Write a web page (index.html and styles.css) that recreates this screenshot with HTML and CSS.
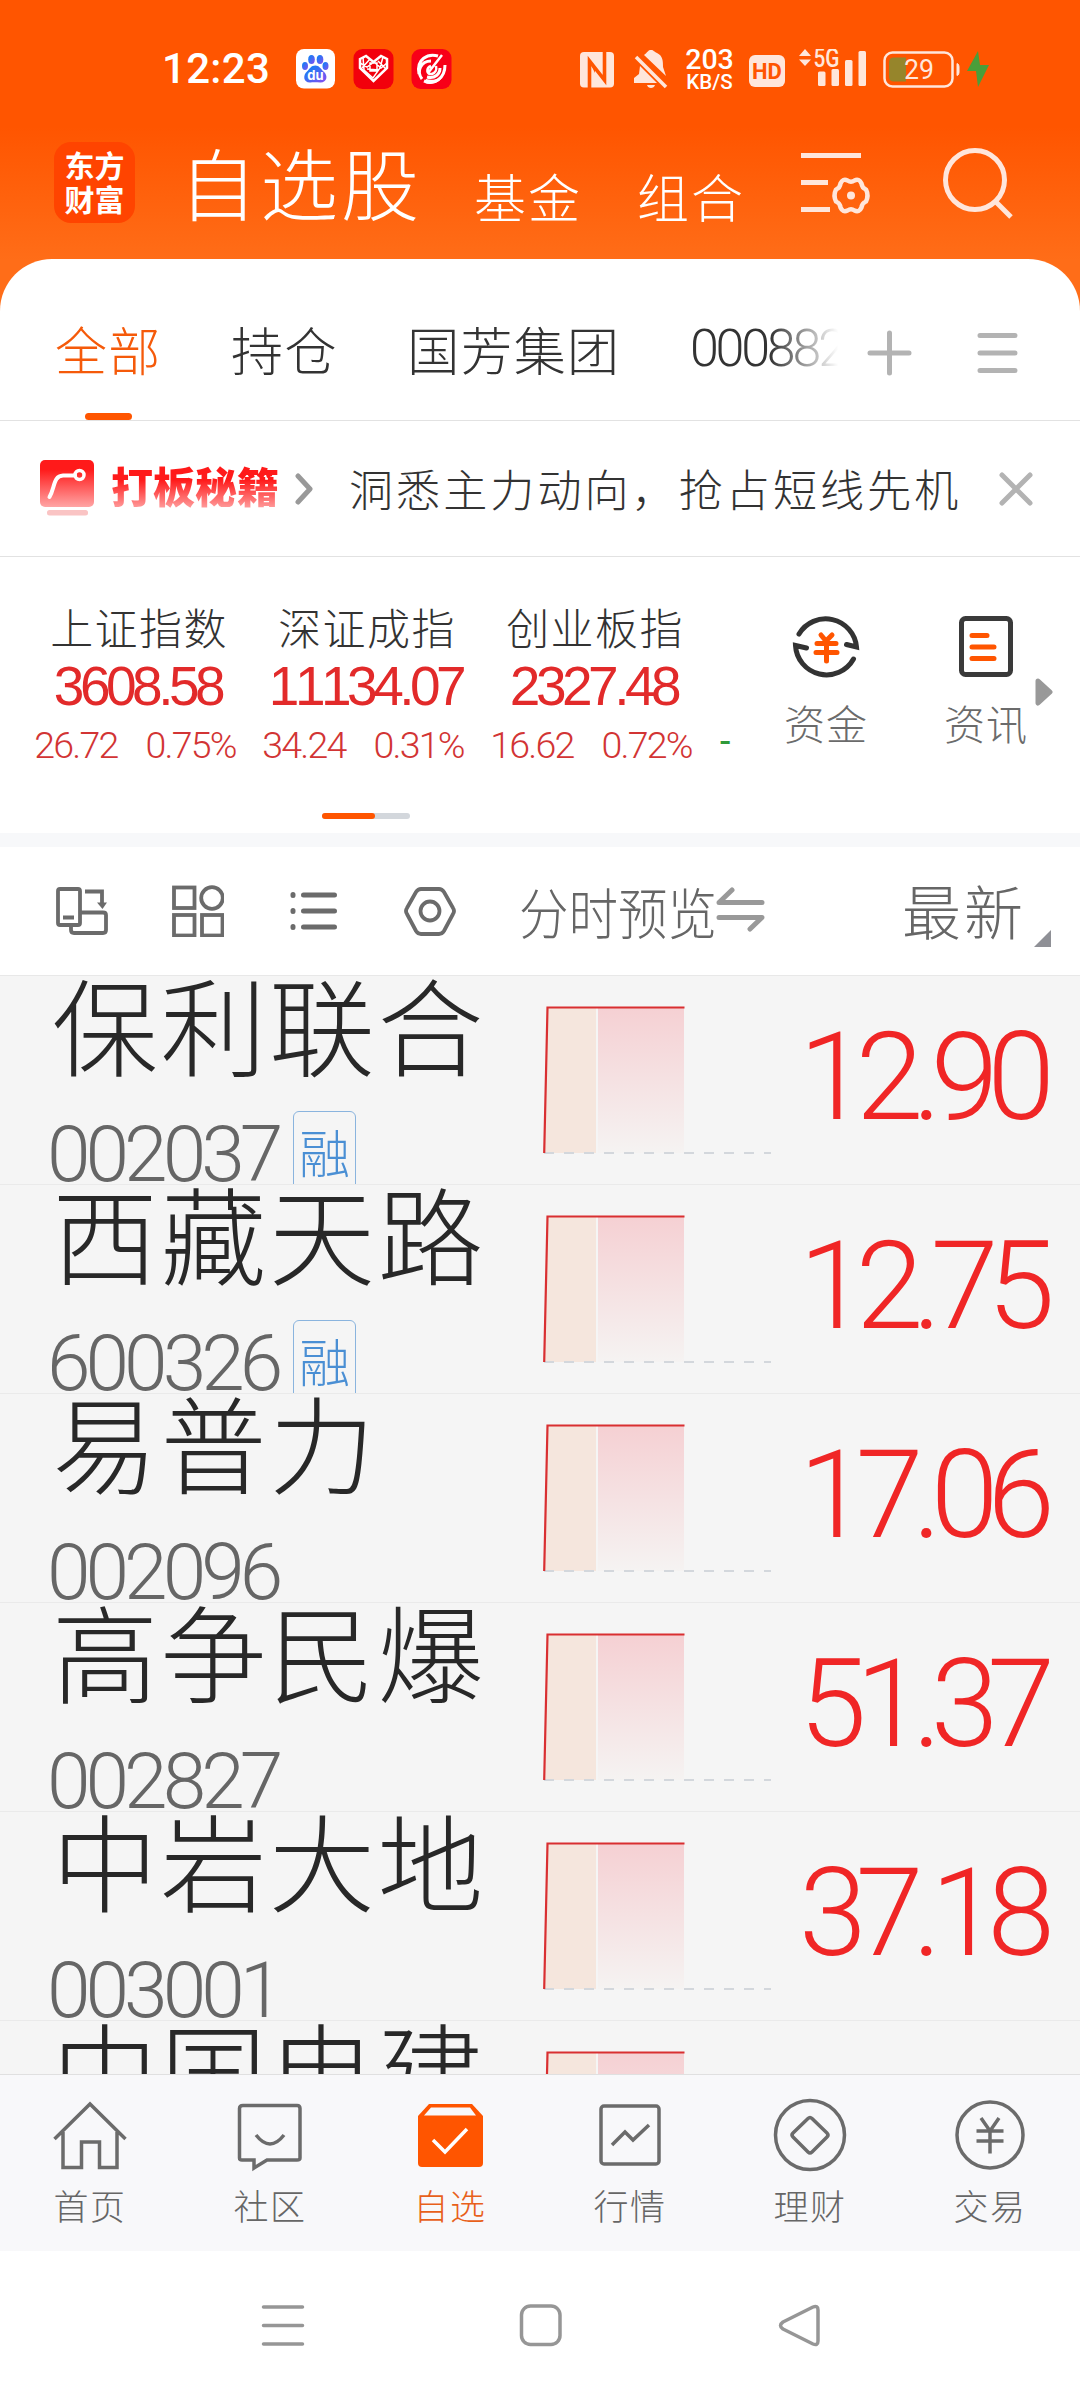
FILE: index.html
```html
<!DOCTYPE html>
<html lang="zh-CN">
<head>
<meta charset="utf-8">
<title>自选股</title>
<link rel="stylesheet" href="styles.css">
</head>
<body>
<svg class="defs" width="0" height="0">
  <defs>
    <linearGradient id="rise" x1="0" y1="0" x2="0" y2="1">
      <stop offset="0" stop-color="#f5d0d3"/><stop offset="1" stop-color="#f5f3f2"/>
    </linearGradient>
    <linearGradient id="promo" x1="0" y1="0" x2="0" y2="1">
      <stop offset="0.2" stop-color="#ff1a1a"/><stop offset="1" stop-color="#ffa5a5"/>
    </linearGradient>
    <linearGradient id="paw" x1="0" y1="0" x2="1" y2="1">
      <stop offset="0.2" stop-color="#1b7bf5"/><stop offset="1" stop-color="#8a4df0"/>
    </linearGradient>
    <symbol id="trend" viewBox="0 0 240 160">
      <path d="M4 153L7 8H56V153Z" fill="#f5e6dd"/>
      <rect x="58" y="8" width="86" height="145" fill="url(#rise)"/>
      <path d="M4 153H231" stroke="#d3d7dc" stroke-width="2" stroke-dasharray="10 10"/>
      <path d="M4.200 153L7.500 7.500H144.500" fill="none" stroke="#d92f31" stroke-width="2.200"/>
    </symbol>
  </defs>
</svg>
<div class="app">
  <div class="status">
    <span class="clock">12:23</span>
    <svg class="app-icons" width="156" height="40" viewBox="0 0 156 40">
      <rect width="39" height="39.500" rx="8" fill="#fff"/>
      <g fill="url(#paw)"><ellipse cx="15.500" cy="10.500" rx="3.300" ry="4.500"/><ellipse cx="24" cy="10.500" rx="3.300" ry="4.500"/><ellipse cx="9" cy="17" rx="3" ry="4"/><ellipse cx="29.500" cy="17" rx="3" ry="4"/><path d="M19.500 16.500c3.500 0 5 3 8 6c5 4 3.500 11-3 11c-3 0-7-.5-10 0c-7 .5-8-7-3.500-11c3-3 4-6 8.500-6z"/></g>
      <text x="19.500" y="31" text-anchor="middle" class="du">du</text>
      <rect x="57.500" width="40" height="40" rx="9" fill="#f2000c"/>
      <path d="M64 10l6-3l7.500 6l7.500-6l6 3v9L77.500 32L64 19z" fill="none" stroke="#fff" stroke-width="2.500"/>
      <path d="M64 14l7 4l7-5l7 6l6-5M67 8l1 13l9 8l7-10l3-11M71 20l12 1M66 19l8-9M82 12l8 8M74 14h7v8h-7z" fill="none" stroke="#fff" stroke-width="1.500"/>
      <rect x="115.500" width="40" height="40" rx="9" fill="#f80018"/>
      <path d="M142 7C132 4 120 10 123 25M128 32c10 4 21-2 21-16M126 30c-6-8-1-18 9-18M131 28c8 2 13-3 13-9" fill="none" stroke="#fff" stroke-width="3"/>
      <path d="M146 6L132 24M135 17c-5 2-5 9 1 8c3-1 5-4 4-8" fill="none" stroke="#fff" stroke-width="2.500"/>
      <path d="M130 30c7 2 14 0 17-5c-1 8-11 12-18 9z" fill="#fff"/>
    </svg>
    <svg class="nfc" width="35" height="36" viewBox="0 0 35 36"><rect width="34" height="35.500" rx="4" fill="#ffe6db"/><path d="M9.500 36V9L24.500 28V0" fill="none" stroke="#ff5500" stroke-width="3.600"/><path d="M9 9l6 5v7z" fill="#ff5500"/></svg>
    <svg class="bell" width="36" height="40" viewBox="0 0 36 40"><path d="M10 5C14 2 14 0 17 0s3 2 6 3c6 3 6 8 6 14l3 9zM6 16l17 17H0v-5l5-4zM13 35h8c-1 4-7 4-8 0z" fill="#ffe6db"/><path d="M2 7L32 37" stroke="#ffe6db" stroke-width="3.500"/></svg>
    <span class="rate"><b>203</b><i>KB/S</i></span>
    <span class="hd">HD</span>
    <svg class="signal" width="70" height="40" viewBox="0 0 70 40"><g fill="#ffe6db"><path d="M0 7l6-7l6 7zM0 10.500h12l-6 6.500z"/><rect x="19" y="22.500" width="7.500" height="14.500" rx="1.500"/><rect x="32.500" y="20" width="7.500" height="17" rx="1.500"/><rect x="46" y="11" width="7.500" height="26" rx="1.500"/><rect x="59.500" y="2" width="7.500" height="35" rx="1.500"/></g><text x="14.500" y="18" class="net" textLength="26" lengthAdjust="spacingAndGlyphs">5G</text></svg>
    <svg class="battery" width="106" height="40" viewBox="0 0 106 40"><rect x="1.500" y="3.500" width="68" height="34" rx="8" fill="none" stroke="#ffe6db" stroke-width="2.500"/><path d="M23 8H11q-5 0-5 5v14q0 5 5 5h12z" fill="#96852b" transform="translate(0 .5)"/><path d="M74 14.500q2 .5 2 3v6q0 2.500-2 3z" fill="#ffe6db" stroke="#ffe6db"/><text x="21" y="29.500" class="pct" textLength="30" lengthAdjust="spacingAndGlyphs">29</text><path d="M95 2L84 22h9l2 16l11-22h-9z" fill="#4a9e3a"/></svg>
  </div>
  <header class="header">
    <div class="logo">东方<br>财富</div>
    <h1 class="title">自选股</h1>
    <span class="htab fund">基金</span>
    <span class="htab combo">组合</span>
    <svg class="manage" width="72" height="66" viewBox="0 0 72 66" fill="none" stroke="#ffe6db" stroke-width="5"><path d="M0 5.500H60M0 32.500H27M0 59.500H29"/><path d="M46.500 30.500Q50 33 53.500 30.500Q58 28 60.500 33.500Q61 38 65 39.500Q68 45.500 65 51.500Q61 53 60.500 57.500Q58 63 53.500 60.500Q50 58 46.500 60.500Q42 63 39.500 57.500Q39 53 35 51.500Q32 45.500 35 39.500Q39 38 39.500 33.500Q42 28 46.500 30.500Z" stroke-width="4.500" stroke-linejoin="round"/><circle cx="50" cy="45.500" r="4" fill="#ffe6db" stroke="none"/></svg>
    <svg class="search" width="72" height="74" viewBox="0 0 72 74" fill="none" stroke="#ffe6db" stroke-width="5"><circle cx="32" cy="32" r="29.500"/><path d="M52 53L68 69"/></svg>
  </header>
  <main class="panel">
    <nav class="tabs">
      <span class="tab on">全部</span><span class="tab">持仓</span><span class="tab">国芳集团</span><span class="tab code">000882</span>
      <svg class="plus" width="46" height="46" viewBox="0 0 46 46"><path d="M3 23H42M22.500 3V43" stroke="#b3b3b3" stroke-width="5" stroke-linecap="round"/></svg>
      <svg class="more" width="42" height="42" viewBox="0 0 42 42"><path d="M3 3.500H38M3 21H38M3 38.500H38" stroke="#b3b3b3" stroke-width="5" stroke-linecap="round"/></svg>
    </nav>
    <div class="promo">
      <svg width="54" height="56" viewBox="0 0 54 56"><rect width="54" height="47" rx="5" fill="url(#promo)"/><path d="M9.500 37C15 28 13 16 23 15.500H35" fill="none" stroke="#fff" stroke-width="4" stroke-linecap="round"/><circle cx="39.500" cy="15" r="4.500" fill="none" stroke="#fff" stroke-width="3.500"/><rect x="7" y="50" width="41" height="5.500" rx="2.500" fill="#fac4c4"/></svg>
      <b class="promo-name">打板秘籍</b>
      <svg class="chev" width="18" height="32" viewBox="0 0 18 32"><path d="M3 3L15 16L3 29" fill="none" stroke="#999" stroke-width="5" stroke-linecap="round" stroke-linejoin="round"/></svg>
      <span class="promo-text">洞悉主力动向，抢占短线先机</span>
      <svg class="close" width="34" height="34" viewBox="0 0 34 34"><path d="M3 3L31 31M31 3L3 31" stroke="#b3b3b3" stroke-width="5" stroke-linecap="round"/></svg>
    </div>
    <section class="market">
      <div class="indices">
        <div class="index"><div class="iname">上证指数</div><div class="ival">3608.58</div><div class="ichg"><span>26.72</span><span>0.75%</span></div></div>
        <div class="index"><div class="iname">深证成指</div><div class="ival">11134.07</div><div class="ichg"><span>34.24</span><span>0.31%</span></div></div>
        <div class="index"><div class="iname">创业板指</div><div class="ival">2327.48</div><div class="ichg"><span>16.62</span><span>0.72%</span></div></div>
        <div class="index next"><div class="dash">-</div></div>
      </div>
      <div class="tool">
        <svg width="70" height="70" viewBox="0 0 70 70" fill="none" stroke="#333" stroke-width="5" stroke-linecap="round"><path d="M8 23A31 31 0 0 1 65.500 36L55.500 33.500M62.500 48A31 31 0 0 1 4.500 34.500L15.500 37"/><path d="M30 24L35 30L41 24M26 32.500H45M25 41.500H46M35.500 31V50" stroke="#ff5500"/></svg>
        <span>资金</span>
      </div>
      <div class="tool news">
        <svg width="70" height="70" viewBox="0 0 70 70" fill="none" stroke-width="5" stroke-linecap="round"><rect x="10.500" y="7.500" width="49" height="56" rx="4" stroke="#3a3a3a"/><path d="M21 24.500H36M21 36H43M21 47.500H43" stroke="#ff5500"/></svg>
        <span>资讯</span>
      </div>
      <svg class="next-arrow" width="18" height="28" viewBox="0 0 18 28"><path d="M3 3L15 14L3 25Z" fill="#999" stroke="#999" stroke-width="5" stroke-linejoin="round"/></svg>
    </section>
    <div class="pager"><i></i></div>
  </main>
  <div class="toolbar">
    <svg class="tb" width="52" height="52" viewBox="0 0 52 52" fill="none" stroke="#6b6b6b" stroke-width="3.800"><rect x="2" y="4" width="22" height="36" rx="2"/><path d="M7 32.500H18M29 6.500H46V20M24 27.500H47Q50 27.500 50 30V45Q50 48 47 48H18Q15 48 15 45V40"/><path d="M41 17.500H51L46.500 24Z" fill="#6b6b6b" stroke="none"/></svg>
    <svg class="tb" width="52" height="52" viewBox="0 0 52 52" fill="none" stroke="#6b6b6b" stroke-width="3.800"><rect x="2" y="2.500" width="20.500" height="20.500"/><circle cx="40" cy="13" r="10.800"/><rect x="2" y="30" width="20.500" height="20.500"/><rect x="30" y="30" width="20.500" height="20.500"/></svg>
    <svg class="tb" width="52" height="52" viewBox="0 0 52 52" stroke="#6b6b6b" stroke-width="5" stroke-linecap="round"><path d="M15.500 10H46.500M15.500 26H46.500M15.500 42H46.500M5 9.500v1M5 25.500v1M5 41.500v1"/></svg>
    <svg class="tb" width="52" height="52" viewBox="0 0 52 52" fill="none" stroke="#6b6b6b" stroke-width="3.800"><path d="M17 4H35Q38 4 40 7L49 23Q51 26 49 29L40 46Q38 49 35 49H17Q14 49 12 46L3 29Q1 26 3 23L12 7Q14 4 17 4Z"/><circle cx="26" cy="26" r="9.500"/></svg>
    <span class="preview">分时预览</span>
    <svg class="swap" width="50" height="46" viewBox="0 0 50 46"><path d="M46 15.500H3L16 3M3 30.500H46L34 42" fill="none" stroke="#999" stroke-width="5" stroke-linecap="round" stroke-linejoin="round"/></svg>
    <span class="latest">最新</span>
    <svg class="corner" width="17" height="17" viewBox="0 0 17 17"><path d="M17 0V17H0Z" fill="#8f9096"/></svg>
  </div>
  <div class="list">
    <div class="row"><div class="stock"><div class="name">保利联合</div><div class="meta"><span class="num">002037</span><span class="badge">融</span></div></div><svg class="chart" width="240" height="160"><use href="#trend"/></svg><div class="price">12.90</div></div>
    <div class="row"><div class="stock"><div class="name">西藏天路</div><div class="meta"><span class="num">600326</span><span class="badge">融</span></div></div><svg class="chart" width="240" height="160"><use href="#trend"/></svg><div class="price">12.75</div></div>
    <div class="row"><div class="stock"><div class="name">易普力</div><div class="meta"><span class="num">002096</span></div></div><svg class="chart" width="240" height="160"><use href="#trend"/></svg><div class="price">17.06</div></div>
    <div class="row"><div class="stock"><div class="name">高争民爆</div><div class="meta"><span class="num">002827</span></div></div><svg class="chart" width="240" height="160"><use href="#trend"/></svg><div class="price">51.37</div></div>
    <div class="row"><div class="stock"><div class="name">中岩大地</div><div class="meta"><span class="num">003001</span></div></div><svg class="chart" width="240" height="160"><use href="#trend"/></svg><div class="price">37.18</div></div>
    <div class="row"><div class="stock"><div class="name">中国电建</div></div><svg class="chart" width="240" height="160"><use href="#trend"/></svg></div>
  </div>
  <nav class="bottom">
    <div class="item"><svg width="76" height="76" viewBox="0 0 76 76"><path d="M2.500 41L38 6L73.500 41M11 34V69.500H29.500V44H47.500V69.500H65V34"/></svg>首页</div>
    <div class="item"><svg width="76" height="76" viewBox="0 0 76 76"><path d="M11 7.500H65Q68 7.500 68 10.500V60Q68 62 65 62H35L22 70V62H10Q7.500 62 7.500 60V10.500Q7.500 7.500 11 7.500ZM24 37Q38 55 52 37"/></svg>社区</div>
    <div class="item on"><svg width="76" height="76" viewBox="0 0 76 76"><path class="box" d="M17 6H60L71 18V65Q71 69 67 69H10Q6 69 6 65V18Z"/><path class="lid" d="M19 9.500H58L64 17.500H12Z"/><path class="tick" d="M21 42L33 54L55 31"/></svg>自选</div>
    <div class="item"><svg width="76" height="76" viewBox="0 0 76 76"><rect x="9" y="8" width="58" height="58" rx="3"/><path d="M20 47L33 34L41 42L57 27"/></svg>行情</div>
    <div class="item"><svg width="76" height="76" viewBox="0 0 76 76"><circle cx="38" cy="37" r="34.500"/><path d="M36 20.500Q38 18.500 40 20.500L55 35Q57 37 55 39L40 54Q38 56 36 54L21 39Q19 37 21 35Z"/></svg>理财</div>
    <div class="item"><svg width="76" height="76" viewBox="0 0 76 76"><circle cx="38" cy="37" r="33"/><path d="M29 20L38 33L47 20M24.500 33H51.500M24.500 43H51.500M38 33V55.500"/></svg>交易</div>
  </nav>
  <div class="sysnav">
    <svg width="44" height="44" viewBox="0 0 44 44"><path d="M2.500 4H41.500M2.500 22.500H41.500M2.500 41H41.500" stroke-linecap="round"/></svg>
    <svg width="44" height="44" viewBox="0 0 44 44"><rect x="2.500" y="3" width="38.500" height="38.500" rx="9"/></svg>
    <svg width="44" height="44" viewBox="0 0 44 44"><path d="M36 4Q41 2 41 7V38Q41 43 36 41L6 26Q1 22.500 6 19Z" stroke-linejoin="round"/></svg>
  </div>
</div>
</body>
</html>
```
FILE: styles.css
```css
* { box-sizing: border-box; }
body { margin: 0; background: #fff; font-family: "Noto Sans CJK SC", sans-serif; font-weight: 300; color: #333; }
svg { display: block; flex: none; }
.defs { position: absolute; }
span, div, h1 { white-space: nowrap; }
.app { width: 1080px; height: 2400px; overflow: hidden; display: flex; flex-direction: column;
  background: linear-gradient(#ff5500 127px, #ff6d18 260px, #ff6d18 320px, #fff 320px); }

.status { height: 138px; flex: none; display: flex; align-items: flex-start; padding: 49px 0 0 162px; color: #fff; }
.clock { width: 134px; font: 500 42px/40px Roboto, sans-serif; letter-spacing: .3px; }
.du { font: 700 13px Inter, sans-serif; fill: #fff; }
.nfc { margin: 3px 0 0 128px; }
.bell { margin: 1px 0 0 19px; }
.rate { width: 49px; margin-left: 15px; display: flex; flex-direction: column; align-items: center; }
.rate b { font: 500 28.5px/22px Roboto, sans-serif; }
.rate i { font: 500 20.5px/20px Roboto, sans-serif; margin-top: 1px; }
.hd { width: 36px; height: 32px; margin: 6px 0 0 15px; border-radius: 6px; background: #ffe6db; color: #ff5500; font: 700 22px/33px Roboto, sans-serif; text-align: center; }
.signal { margin-left: 14px; }
.net { font: 500 25px Roboto, sans-serif; fill: #ffe6db; }
.battery { margin-left: 14px; }
.pct { font: 400 28px Roboto, sans-serif; fill: #ffe6db; }

.header { height: 121px; flex: none; display: flex; align-items: flex-start; color: #fff; padding-left: 54px; }
.logo { width: 81px; height: 81px; margin-top: 4px; padding-top: 5px; border-radius: 17px; background: #ff4400; font-weight: 700; font-size: 30px; line-height: 34px; text-align: center; }
.title { margin: 3px 0 0 44px; width: 295px; font-size: 78px; font-weight: 300; line-height: 80px; letter-spacing: 3px; }
.htab { font-size: 52px; line-height: 60px; letter-spacing: 2px; margin-top: 28px; }
.fund { width: 163px; }
.combo { width: 164px; }
.manage { margin-top: 12px; }
.search { margin: 10px 0 0 70px; }

.panel { height: 574px; flex: none; background: #fff; border-radius: 52px 52px 0 0; }
.tabs { height: 162px; display: flex; align-items: flex-start; border-bottom: 1px solid #e2e2e2; padding: 56px 0 0 55px; }
.tab { font-size: 52px; line-height: 68px; height: 105px; letter-spacing: 1.300px; margin-right: 69.500px; }
.tab.on { color: #f55a0a; position: relative; }
.tab.on::after { content: ""; position: absolute; left: 30px; bottom: 0; width: 47px; height: 7px; border-radius: 4px; background: #ff5500; }
.tab.code { font-family: Roboto, sans-serif; width: 148px; overflow: hidden; margin-right: 0; letter-spacing: -3.200px; -webkit-mask-image: linear-gradient(90deg, #000 80px, transparent 148px); mask-image: linear-gradient(90deg, #000 80px, transparent 148px); }
.plus { margin: 15px 0 0 29px; }
.more { margin: 17px 0 0 64px; }
.promo { height: 136px; display: flex; align-items: flex-start; border-bottom: 1px solid #e2e2e2; padding: 39px 0 0 40px; }
.promo-name { margin: 0 0 0 17px; width: 172px; font-size: 42px; font-weight: 900; line-height: 50px; background: linear-gradient(#ff1a1a 40%, #ffa5a5 100%); -webkit-background-clip: text; background-clip: text; color: transparent; }
.chev { margin: 13px 0 0 12px; }
.promo-text { font-size: 44px; letter-spacing: 3.100px; line-height: 54px; width: 612px; margin: 1px 0 0 36px; }
.close { margin: 12px 0 0 38px; }

.market { height: 256px; display: flex; align-items: flex-start; }
.indices { display: flex; width: 745px; padding: 44px 0 0 25px; overflow: hidden; }
.index { width: 228px; flex: none; text-align: center; }
.iname { font-size: 43px; letter-spacing: 1.400px; line-height: 50px; }
.ival { font: 400 55px/60px "Liberation Sans", sans-serif; letter-spacing: -4.500px; font-kerning: none; color: #e22a2a; margin: 5px 3px 0 0; }
.ichg { display: flex; justify-content: center; gap: 28px; margin: -1px 8px 0 0; font: 300 37.500px/60px Roboto, sans-serif; letter-spacing: -1.800px; color: #d23434; }
.next { text-align: left; }
.dash { margin: 109px 0 0 10px; font: 400 37px/60px "Liberation Sans", sans-serif; color: #2f9a3a; }
.tool { width: 162px; padding-top: 54px; display: flex; flex-direction: column; align-items: center; color: #6b6b6b; font-size: 41px; line-height: 50px; }
.tool span { margin-top: 16px; letter-spacing: 1px; }
.news { width: 110px; margin-left: 24px; }
.next-arrow { margin: 121px 0 0 -6px; }
.pager { width: 88px; height: 6px; border-radius: 3px; background: #d3d7dc; margin: 0 0 0 322px; }
.pager i { display: block; width: 53px; height: 6px; border-radius: 3px; background: #ff5500; }

.toolbar { height: 143px; flex: none; background: #fff; border-top: 14px solid #f7f8fa; border-bottom: 1px solid #e8e8e8; display: flex; align-items: flex-start; padding: 38px 0 0 56px; color: #666; }
.tb { margin-right: 64px; }
.preview { font-size: 55px; line-height: 50px; width: 196px; transform: scaleX(.9); transform-origin: 0 0; margin-left: -1px; }
.swap { margin: 2px 0 0 1px; }
.latest { font-size: 59px; letter-spacing: 3px; line-height: 50px; margin-left: 136px; width: 132px; }
.corner { margin-top: 45px; }

.list { height: 1098px; flex: none; overflow: hidden; background: #f5f5f5; }
.row { height: 209px; display: flex; align-items: flex-start; border-bottom: 1px solid #eaeaea; overflow: hidden; }
.stock { width: 540px; height: 208px; padding-left: 47px; overflow: hidden; }
.name { font-size: 106px; letter-spacing: 2.500px; line-height: 110px; color: #282828; margin: -9px 0 9px 5px; }
.meta { display: flex; align-items: flex-start; height: 98px; }
.num { font: 300 78.500px/80px Roboto, sans-serif; letter-spacing: -5px; color: #666; width: 246px; margin-top: 28px; }
.badge { margin-top: 25px; width: 63px; height: 90px; border: 1.500px solid #8ab4de; border-radius: 6px; font-size: 51px; line-height: 78px; text-align: center; color: #4a8fd4; }
.chart { margin-top: 24px; }
.price { flex: 1; text-align: right; padding-right: 36px; margin-top: 35px; font: 300 122px/134px Roboto, sans-serif; letter-spacing: -11px; color: #f02626; }

.bottom { height: 177px; flex: none; background: #f8f8fa; border-top: 1px solid #e0e0e0; display: flex; }
.item { width: 180px; padding-top: 23px; display: flex; flex-direction: column; align-items: center; font-size: 35px; line-height: 50px; letter-spacing: 1.500px; color: #666; gap: 6px; }
.item svg { fill: none; stroke: #6b6b6b; stroke-width: 3.500; }
.item.on { color: #e8601a; }
.item .box { fill: #ff5500; stroke: none; }
.item .lid { fill: #f8f8fa; stroke: none; }
.item .tick { stroke: #fff; }
.sysnav { height: 149px; flex: none; background: #fff; display: flex; justify-content: center; gap: 214px; padding: 52px 0 0 2px; }
.sysnav svg { fill: none; stroke: #969696; stroke-width: 3.500; }
```
